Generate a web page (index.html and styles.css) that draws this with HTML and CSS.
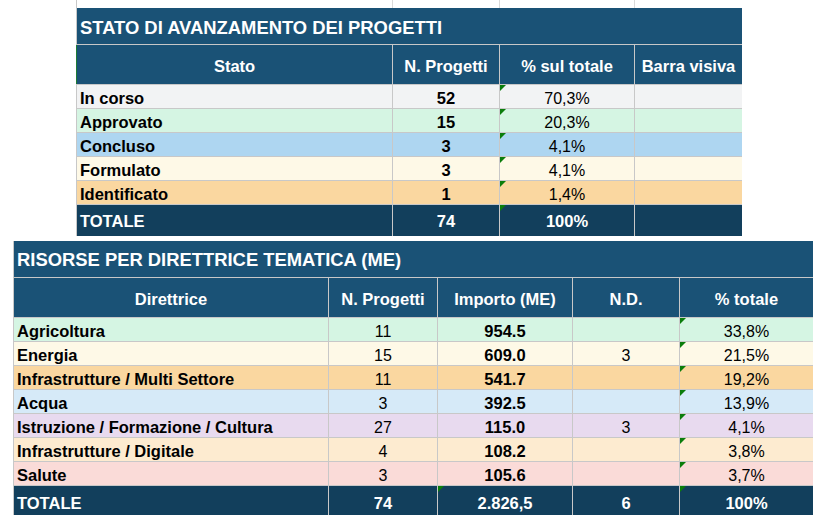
FILE: index.html
```html
<!DOCTYPE html>
<html lang="it">
<head>
<meta charset="utf-8">
<title>Progetti</title>
<link rel="stylesheet" href="styles.css">
</head>
<body>
<div class="gridlines">
  <div></div><div></div><div></div><div></div>
</div>

<section class="sheet sheet-top">
  <div class="cell title title-top">STATO DI AVANZAMENTO DEI PROGETTI</div>

  <div class="cell head head-first">Stato</div>
  <div class="cell head">N. Progetti</div>
  <div class="cell head">% sul totale</div>
  <div class="cell head">Barra visiva</div>

  <div class="cell lbl bg-grey">In corso</div>
  <div class="cell num b bg-grey">52</div>
  <div class="cell num flag bg-grey">70,3%</div>
  <div class="cell bg-grey"></div>

  <div class="cell lbl bg-green">Approvato</div>
  <div class="cell num b bg-green">15</div>
  <div class="cell num flag bg-green">20,3%</div>
  <div class="cell bg-green"></div>

  <div class="cell lbl bg-blue">Concluso</div>
  <div class="cell num b bg-blue">3</div>
  <div class="cell num flag bg-blue">4,1%</div>
  <div class="cell bg-blue"></div>

  <div class="cell lbl bg-cream">Formulato</div>
  <div class="cell num b bg-cream">3</div>
  <div class="cell num flag bg-cream">4,1%</div>
  <div class="cell bg-cream"></div>

  <div class="cell lbl bg-orange">Identificato</div>
  <div class="cell num b bg-orange">1</div>
  <div class="cell num flag bg-orange">1,4%</div>
  <div class="cell bg-orange"></div>

  <div class="cell total total-top lbl">TOTALE</div>
  <div class="cell total total-top num">74</div>
  <div class="cell total total-top num flag">100%</div>
  <div class="cell total total-top"></div>
</section>

<section class="sheet sheet-bottom">
  <div class="cell title title-bottom">RISORSE PER DIRETTRICE TEMATICA (ME)</div>

  <div class="cell head">Direttrice</div>
  <div class="cell head">N. Progetti</div>
  <div class="cell head">Importo (ME)</div>
  <div class="cell head">N.D.</div>
  <div class="cell head">% totale</div>

  <div class="cell lbl bg-green">Agricoltura</div>
  <div class="cell num bg-green">11</div>
  <div class="cell num b bg-green">954.5</div>
  <div class="cell num bg-green"></div>
  <div class="cell num flag bg-green">33,8%</div>

  <div class="cell lbl bg-cream">Energia</div>
  <div class="cell num bg-cream">15</div>
  <div class="cell num b bg-cream">609.0</div>
  <div class="cell num bg-cream">3</div>
  <div class="cell num flag bg-cream">21,5%</div>

  <div class="cell lbl bg-orange">Infrastrutture / Multi Settore</div>
  <div class="cell num bg-orange">11</div>
  <div class="cell num b bg-orange">541.7</div>
  <div class="cell num bg-orange"></div>
  <div class="cell num flag bg-orange">19,2%</div>

  <div class="cell lbl bg-lblue">Acqua</div>
  <div class="cell num bg-lblue">3</div>
  <div class="cell num b bg-lblue">392.5</div>
  <div class="cell num bg-lblue"></div>
  <div class="cell num flag bg-lblue">13,9%</div>

  <div class="cell lbl bg-purple">Istruzione / Formazione / Cultura</div>
  <div class="cell num bg-purple">27</div>
  <div class="cell num b bg-purple">115.0</div>
  <div class="cell num bg-purple">3</div>
  <div class="cell num flag bg-purple">4,1%</div>

  <div class="cell lbl bg-peach">Infrastrutture / Digitale</div>
  <div class="cell num bg-peach">4</div>
  <div class="cell num b bg-peach">108.2</div>
  <div class="cell num bg-peach"></div>
  <div class="cell num flag bg-peach">3,8%</div>

  <div class="cell lbl bg-pink">Salute</div>
  <div class="cell num bg-pink">3</div>
  <div class="cell num b bg-pink">105.6</div>
  <div class="cell num bg-pink"></div>
  <div class="cell num flag bg-pink">3,7%</div>

  <div class="cell total total-bottom lbl">TOTALE</div>
  <div class="cell total total-bottom num">74</div>
  <div class="cell total total-bottom num flag">2.826,5</div>
  <div class="cell total total-bottom num">6</div>
  <div class="cell total total-bottom num flag">100%</div>
</section>
</body>
</html>
```

FILE: styles.css
```css
html, body {
  margin: 0;
  padding: 0;
  background: #ffffff;
}

body {
  font-family: "Liberation Sans", Arial, sans-serif;
  font-size: 16px;
  color: #000000;
}

/* faint spreadsheet gridlines above the first table */
.gridlines {
  display: grid;
  grid-template-columns: 316px 107px 135px 107px;
  height: 8px;
  margin-left: 76px;
  width: 666px;
}

.gridlines div {
  border-left: 1px solid #dadada;
}

.gridlines div:first-child {
  border-left-color: #c8c8c8;
}

.sheet {
  display: grid;
  gap: 1px;
  padding-left: 1px;
  background: #c8c8c8;
}

.sheet-top {
  margin-left: 76px;
  width: 665px;
  grid-template-columns: 315px 106px 134px 107px;
  grid-template-rows: 36px 39px repeat(5, 23px) 31px;
}

.sheet-bottom {
  margin: 5px 0 0 13px;
  width: 799px;
  grid-template-columns: 314px 108px 134px 106px 133px;
  grid-template-rows: 36px 39px repeat(7, 23px) 29px;
}

.cell {
  display: flex;
  align-items: flex-end;
  justify-content: center;
  padding: 0 3px;
  line-height: 19px;
  white-space: nowrap;
  overflow: visible;
  min-width: 0;
}

.title {
  grid-column: 1 / -1;
  justify-content: flex-start;
  align-items: center;
  background: #1a5276;
  color: #ffffff;
  font-weight: bold;
  font-size: 18.4px;
  line-height: 20px;
}

.title-top { padding-top: 4px; }
.title-bottom { padding-top: 1px; }

.head {
  align-items: center;
  padding-top: 3px;
  background: #1a5276;
  color: #ffffff;
  font-weight: bold;
  font-size: 16.5px;
}

.head-first {
  box-shadow: -1px 0 0 #1e7b34;
}

.total {
  align-items: center;
  background: #123f5c;
  color: #ffffff;
  font-weight: bold;
  font-size: 16.5px;
}

.total-top { padding-top: 2px; }
.total-bottom { padding-top: 5px; }

.lbl {
  justify-content: flex-start;
  font-weight: bold;
  font-size: 16.5px;
}

.num { justify-content: center; }

.b {
  font-weight: bold;
  font-size: 16.5px;
}

.flag { position: relative; }

.flag::before {
  content: "";
  position: absolute;
  top: 0;
  left: 0;
  border-top: 6px solid #0b7d0b;
  border-right: 6px solid transparent;
}

.bg-grey { background: #f2f3f4; }
.bg-green { background: #d5f5e3; }
.bg-blue { background: #aed6f1; }
.bg-cream { background: #fef9e7; }
.bg-orange { background: #fad7a0; }
.bg-lblue { background: #d6eaf8; }
.bg-purple { background: #e8daef; }
.bg-peach { background: #fdebd0; }
.bg-pink { background: #fadbd8; }
```
